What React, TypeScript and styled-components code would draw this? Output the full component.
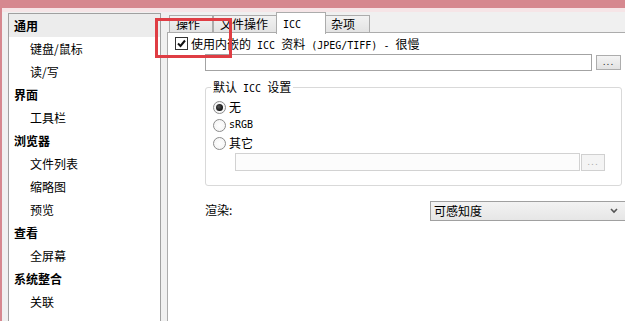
import React from "react"
import styled, { createGlobalStyle } from "styled-components"

const GlobalStyle = createGlobalStyle`
  html, body {
    margin: 0;
    padding: 0;
    background: #f0f0f0;
  }
  body {
    font-family: "Noto Sans CJK SC", "Noto Sans", sans-serif;
    font-size: 12px;
    line-height: 14px;
    color: #000;
  }
`

interface TreeItem {
  label: string
  level: 0 | 1
  selected?: boolean
}

const treeItems: TreeItem[] = [
  { label: "通用", level: 0, selected: true },
  { label: "键盘/鼠标", level: 1 },
  { label: "读/写", level: 1 },
  { label: "界面", level: 0 },
  { label: "工具栏", level: 1 },
  { label: "浏览器", level: 0 },
  { label: "文件列表", level: 1 },
  { label: "缩略图", level: 1 },
  { label: "预览", level: 1 },
  { label: "查看", level: 0 },
  { label: "全屏幕", level: 1 },
  { label: "系统整合", level: 0 },
  { label: "关联", level: 1 },
]

const tabs = [
  { label: "操作", width: 44 },
  { label: "文件操作", width: 65 },
  { label: "ICC", width: 50, active: true, latin: true },
  { label: "杂项", width: 46 },
]

const Check = () => (
  <CheckBox>
    <svg width="11" height="11" viewBox="0 0 11 11">
      <polyline
        points="2,5.5 4.5,8 9,2.5"
        fill="none"
        stroke="#111"
        strokeWidth="2"
      />
    </svg>
  </CheckBox>
)

const Chevron = () => (
  <svg width="8" height="6" viewBox="0 0 8 6">
    <polyline points="1,1 4,4 7,1" fill="none" stroke="#555" strokeWidth="1.6" />
  </svg>
)

export default function App() {
  return (
    <Window>
      <GlobalStyle />
      <TitleEdge />
      <Glow />
      <Body>
        <Tree>
          {treeItems.map((item) => (
            <TreeRow key={item.label} $level={item.level} $selected={item.selected}>
              {item.label}
            </TreeRow>
          ))}
        </Tree>

        <TabArea>
          <TabStrip>
            {tabs.map((tab) => (
              <Tab key={tab.label} $width={tab.width} $active={tab.active}>
                {tab.latin ? <Latin>{tab.label}</Latin> : tab.label}
              </Tab>
            ))}
          </TabStrip>
          <Page>
            <CheckRow>
              <Check />
              <span>
                使用内嵌的<Latin> ICC </Latin>资料<Latin> (JPEG/TIFF) - </Latin>很慢
              </span>
            </CheckRow>

            <FieldRow $indent={30} $top={4}>
              <TextBox $width={387} $height={17} />
              <DotsButton $width={25} $height={15} $gap={4}>
                ...
              </DotsButton>
            </FieldRow>

            <Group>
              <Legend>
                默认<Latin> ICC </Latin>设置
              </Legend>
              <RadioRow $first>
                <Radio $checked />
                <span>无</span>
              </RadioRow>
              <RadioRow>
                <Radio />
                <Latin>sRGB</Latin>
              </RadioRow>
              <RadioRow>
                <Radio />
                <span>其它</span>
              </RadioRow>
              <FieldRow $indent={22} $top={1}>
                <TextBox $width={345} $height={18} $disabled />
                <DotsButton $width={24} $height={17} $gap={1} $disabled>
                  ...
                </DotsButton>
              </FieldRow>
            </Group>

            <RenderRow>
              <RenderLabel>渲染:</RenderLabel>
              <Select>
                <span>可感知度</span>
                <Chevron />
              </Select>
            </RenderRow>
          </Page>
        </TabArea>
      </Body>
      <Highlight />
    </Window>
  )
}

const Window = styled.div`
  position: relative;
  width: 625px;
  height: 321px;
  overflow: hidden;
  box-sizing: border-box;
  border-left: 2px solid #d6888f;
  background: #f0f0f0;
`

const TitleEdge = styled.div`
  height: 8px;
  background: #d6888f;
`

const Glow = styled.div`
  height: 4px;
  background: #f6e5e7;
`

const Body = styled.div`
  display: flex;
  gap: 6px;
  padding-left: 6px;
`

const Latin = styled.span`
  font-family: "DejaVu Sans Mono", "Liberation Mono", monospace;
  font-size: 10px;
  line-height: 10px;
  white-space: pre;
`

const Tree = styled.div`
  flex: 0 0 153px;
  margin-top: 1px;
  height: 320px;
  box-sizing: border-box;
  border: 1px solid #a0a0a0;
  background: #fff;
`

const TreeRow = styled.div<{ $level: 0 | 1; $selected?: boolean }>`
  height: 23px;
  display: flex;
  align-items: center;
  padding-left: ${(p) => (p.$level === 0 ? 5 : 21)}px;
  font-weight: ${(p) => (p.$level === 0 ? 700 : 400)};
  background: ${(p) => (p.$selected ? "#ececec" : "transparent")};
`

const TabArea = styled.div`
  flex: 0 0 480px;
  display: flex;
  flex-direction: column;
`

const TabStrip = styled.div`
  display: flex;
  align-items: flex-end;
  height: 20px;
  padding-left: 2px;
`

const Tab = styled.div<{ $width: number; $active?: boolean }>`
  position: relative;
  box-sizing: border-box;
  width: ${(p) => p.$width}px;
  height: ${(p) => (p.$active ? 22 : 17)}px;
  margin: ${(p) => (p.$active ? "0 -2px -2px -2px" : "0")};
  z-index: ${(p) => (p.$active ? 1 : 0)};
  padding: ${(p) => (p.$active ? "3px 0 0 6px" : "1px 0 0 6px")};
  border: 1px solid #acacac;
  border-bottom: none;
  background: ${(p) =>
    p.$active ? "#fff" : "linear-gradient(#f2f2f2, #e3e3e3)"};
  white-space: nowrap;
`

const Page = styled.div`
  height: 300px;
  box-sizing: border-box;
  border: 1px solid #acacac;
  border-right: none;
  background: #fff;
  padding-left: 7px;
  display: flex;
  flex-direction: column;
  align-items: flex-start;
`

const CheckRow = styled.div`
  margin-top: 4px;
  height: 13px;
  display: flex;
  align-items: center;
  gap: 3px;
  white-space: nowrap;
`

const CheckBox = styled.div`
  width: 13px;
  height: 13px;
  box-sizing: border-box;
  border: 1px solid #333;
  background: #fff;
  display: flex;
  align-items: center;
  justify-content: center;
`

const FieldRow = styled.div<{ $indent: number; $top: number }>`
  display: flex;
  align-items: center;
  margin: ${(p) => p.$top}px 0 0 ${(p) => p.$indent}px;
`

const TextBox = styled.div<{ $width: number; $height: number; $disabled?: boolean }>`
  width: ${(p) => p.$width}px;
  height: ${(p) => p.$height}px;
  box-sizing: border-box;
  border: 1px solid ${(p) => (p.$disabled ? "#d2d2d2" : "#a3a3a3")};
  background: ${(p) => (p.$disabled ? "#fcfcfc" : "#fff")};
`

const DotsButton = styled.div<{
  $width: number
  $height: number
  $gap: number
  $disabled?: boolean
}>`
  width: ${(p) => p.$width}px;
  height: ${(p) => p.$height}px;
  margin-left: ${(p) => p.$gap}px;
  box-sizing: border-box;
  border: 1px solid ${(p) => (p.$disabled ? "#d0d0d0" : "#adadad")};
  background: ${(p) =>
    p.$disabled ? "#f4f4f4" : "linear-gradient(#f4f4f4, #e2e2e2)"};
  color: ${(p) => (p.$disabled ? "#a8a8a8" : "#222")};
  font-family: "DejaVu Sans", sans-serif;
  font-size: 9px;
  line-height: 11px;
  letter-spacing: 1px;
  display: flex;
  align-items: center;
  justify-content: center;
`

const Group = styled.fieldset`
  margin: 9px 0 0 30px;
  width: 417px;
  min-width: 0;
  box-sizing: border-box;
  padding: 0 7px 14px 7px;
  border: 1px solid #d9d9d9;
  border-radius: 3px;
`

const Legend = styled.legend`
  padding: 0 2px;
  margin-left: -2px;
  height: 14px;
  line-height: 14px;
`

const RadioRow = styled.div<{ $first?: boolean }>`
  height: 18px;
  margin-top: ${(p) => (p.$first ? 4 : 0)}px;
  display: flex;
  align-items: center;
  gap: 3px;
`

const Radio = styled.div<{ $checked?: boolean }>`
  width: 13px;
  height: 13px;
  box-sizing: border-box;
  border-radius: 50%;
  border: 1px solid #8c8c8c;
  background: radial-gradient(circle at 50% 50%, #fff 0, #f2f2f2 100%);
  display: flex;
  align-items: center;
  justify-content: center;

  &::after {
    content: "";
    width: 7px;
    height: 7px;
    border-radius: 50%;
    background: radial-gradient(circle at 40% 40%, #555 0, #111 70%);
    display: ${(p) => (p.$checked ? "block" : "none")};
  }
`

const RenderRow = styled.div`
  margin: 15px 0 0 30px;
  display: flex;
  align-items: flex-start;
`

const RenderLabel = styled.div`
  width: 225px;
  margin-top: 2px;
`

const Select = styled.div`
  width: 200px;
  height: 20px;
  box-sizing: border-box;
  border: 1px solid #a0a0a0;
  background: linear-gradient(#f3f3f3, #e6e6e6);
  display: flex;
  align-items: center;
  justify-content: space-between;
  padding: 0 11px 0 3px;
`

const Highlight = styled.div`
  position: absolute;
  left: 153px;
  top: 18px;
  width: 77px;
  height: 40px;
  box-sizing: border-box;
  border: 3px solid #df3d44;
  pointer-events: none;
`
